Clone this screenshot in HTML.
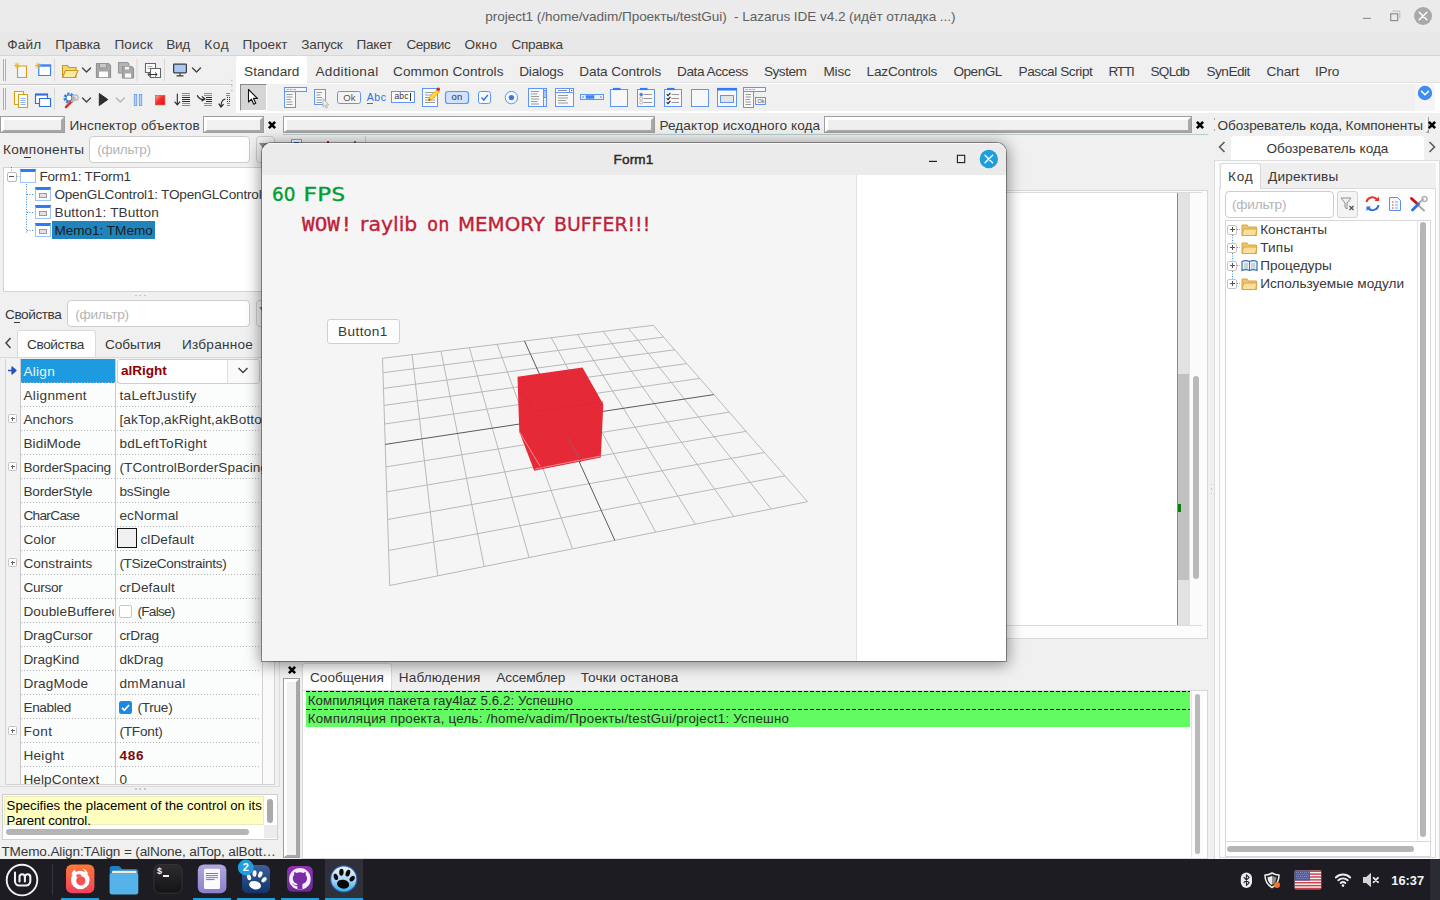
<!DOCTYPE html>
<html lang="ru"><head><meta charset="utf-8"><title>Lazarus IDE</title>
<style>
html,body{margin:0;padding:0}
body{width:1440px;height:900px;overflow:hidden;position:relative;background:#f0f0f0;font-family:"Liberation Sans",sans-serif;}
body div,body span.t,body svg{position:absolute}
div{box-sizing:border-box}
.t{white-space:nowrap}
</style></head><body>
<div style="left:0px;top:0px;width:1440px;height:32px;background:#ebebec;"></div>
<span class="t" style="left:485.3px;top:8.00px;font-size:13.6px;line-height:18px;color:#606060;letter-spacing:-0.073px;white-space:pre;">project1 (/home/vadim/Проекты/testGui)  - Lazarus IDE v4.2 (идёт отладка ...)</span>
<svg style="left:1355px;top:4px" width="85" height="24" viewBox="0 0 85 24">
<path d="M7.900 14.400h8" stroke="#8e8e8e" stroke-width="1.100" fill="none"/>
<rect x="35.700" y="9.800" width="7" height="6.800" fill="none" stroke="#8e8e8e" stroke-width="1.200"/>
<path d="M37.200 7.100h7.600v7.400" stroke="#bdbdbd" stroke-width="1" fill="none"/>
<circle cx="68.050" cy="12" r="9" fill="#a9a9ab"/>
<path d="M64.250 8.200l7.600 7.600M71.850 8.200l-7.600 7.600" stroke="#fff" stroke-width="1.500" stroke-linecap="round"/>
</svg>
<div style="left:0px;top:32px;width:1440px;height:24px;background:#e8e8e8;"></div>
<div style="left:0px;top:55px;width:1440px;height:1px;background:#d6d6d6;"></div>
<span class="t" style="left:7.2px;top:35.80px;font-size:13.6px;line-height:18px;color:#404040;letter-spacing:0.159px;">Файл</span>
<span class="t" style="left:55.2px;top:35.80px;font-size:13.6px;line-height:18px;color:#404040;letter-spacing:-0.164px;">Правка</span>
<span class="t" style="left:114.4px;top:35.80px;font-size:13.6px;line-height:18px;color:#404040;letter-spacing:0.132px;">Поиск</span>
<span class="t" style="left:166.3px;top:35.80px;font-size:13.6px;line-height:18px;color:#404040;letter-spacing:-0.397px;">Вид</span>
<span class="t" style="left:204.2px;top:35.80px;font-size:13.6px;line-height:18px;color:#404040;letter-spacing:0.738px;">Код</span>
<span class="t" style="left:242.5px;top:35.80px;font-size:13.6px;line-height:18px;color:#404040;letter-spacing:0.064px;">Проект</span>
<span class="t" style="left:301.3px;top:35.80px;font-size:13.6px;line-height:18px;color:#404040;letter-spacing:-0.206px;">Запуск</span>
<span class="t" style="left:356.4px;top:35.80px;font-size:13.6px;line-height:18px;color:#404040;letter-spacing:-0.216px;">Пакет</span>
<span class="t" style="left:406.4px;top:35.80px;font-size:13.6px;line-height:18px;color:#404040;letter-spacing:-0.453px;">Сервис</span>
<span class="t" style="left:464.4px;top:35.80px;font-size:13.6px;line-height:18px;color:#404040;letter-spacing:0.335px;">Окно</span>
<span class="t" style="left:511.5px;top:35.80px;font-size:13.6px;line-height:18px;color:#404040;letter-spacing:-0.305px;">Справка</span>
<div style="left:0px;top:56px;width:1440px;height:57px;background:#f0f0f0;"></div>
<div style="left:0px;top:84px;width:232px;height:1px;background:#c9c9c9;"></div>
<div style="left:0px;top:85px;width:232px;height:1px;background:#fbfbfb;"></div>
<div style="left:235.6px;top:56.4px;width:71.7px;height:28px;background:#ffffff;border-radius:3px 3px 0 0;"></div>
<div style="left:307.3px;top:82px;width:1133px;height:1px;background:#e2e2e2;"></div>
<div style="left:235.6px;top:82.7px;width:1204.4px;height:30.8px;background:#ffffff;"></div>
<div style="left:240.2px;top:84.2px;width:1175px;height:26.8px;background:#f0f0f0;"></div>
<div style="left:1415px;top:84.2px;width:20px;height:26.8px;background:#f5f5f5;"></div>
<span class="t" style="left:244.1px;top:62.90px;font-size:13.6px;line-height:18px;color:#3c3c3c;letter-spacing:0.004px;">Standard</span>
<span class="t" style="left:315.4px;top:62.90px;font-size:13.6px;line-height:18px;color:#3c3c3c;letter-spacing:0.342px;">Additional</span>
<span class="t" style="left:393.1px;top:62.90px;font-size:13.6px;line-height:18px;color:#3c3c3c;letter-spacing:0.061px;">Common Controls</span>
<span class="t" style="left:519.2px;top:62.90px;font-size:13.6px;line-height:18px;color:#3c3c3c;letter-spacing:-0.174px;">Dialogs</span>
<span class="t" style="left:579.2px;top:62.90px;font-size:13.6px;line-height:18px;color:#3c3c3c;letter-spacing:-0.084px;">Data Controls</span>
<span class="t" style="left:677px;top:62.90px;font-size:13.6px;line-height:18px;color:#3c3c3c;letter-spacing:-0.426px;">Data Access</span>
<span class="t" style="left:764px;top:62.90px;font-size:13.6px;line-height:18px;color:#3c3c3c;letter-spacing:-0.506px;">System</span>
<span class="t" style="left:823.5px;top:62.90px;font-size:13.6px;line-height:18px;color:#3c3c3c;letter-spacing:-0.218px;">Misc</span>
<span class="t" style="left:866.5px;top:62.90px;font-size:13.6px;line-height:18px;color:#3c3c3c;letter-spacing:-0.175px;">LazControls</span>
<span class="t" style="left:953.5px;top:62.90px;font-size:13.6px;line-height:18px;color:#3c3c3c;letter-spacing:-0.518px;">OpenGL</span>
<span class="t" style="left:1018.5px;top:62.90px;font-size:13.6px;line-height:18px;color:#3c3c3c;letter-spacing:-0.419px;">Pascal Script</span>
<span class="t" style="left:1108.5px;top:62.90px;font-size:13.6px;line-height:18px;color:#3c3c3c;letter-spacing:-1.223px;">RTTI</span>
<span class="t" style="left:1150.5px;top:62.90px;font-size:13.6px;line-height:18px;color:#3c3c3c;letter-spacing:-0.757px;">SQLdb</span>
<span class="t" style="left:1206.5px;top:62.90px;font-size:13.6px;line-height:18px;color:#3c3c3c;letter-spacing:-0.510px;">SynEdit</span>
<span class="t" style="left:1266.5px;top:62.90px;font-size:13.6px;line-height:18px;color:#3c3c3c;letter-spacing:-0.113px;">Chart</span>
<span class="t" style="left:1315px;top:62.90px;font-size:13.6px;line-height:18px;color:#3c3c3c;letter-spacing:-0.212px;">IPro</span>
<div style="left:240.2px;top:84.2px;width:26.8px;height:26.8px;background:#d5d5d5;border-left:1px solid #8a8a8a;border-top:1px solid #8a8a8a;border-right:1px solid #fff;border-bottom:1px solid #fff;"></div>
<svg style="left:1417px;top:85px" width="16" height="16" viewBox="0 0 16 16"><circle cx="8" cy="8" r="7.2" fill="#3f8cf5"/><path d="M4.6 6.4L8 9.8l3.4-3.4" stroke="#fff" stroke-width="1.6" fill="none" stroke-linecap="round" stroke-linejoin="round"/></svg>
<svg style="left:0;top:56px" width="236" height="57" viewBox="0 0 236 57"><path d="M3.5 3v22M5.5 3v22" stroke="#b0b0b0" stroke-width="1"/><path d="M3.5 32v22M5.5 32v22" stroke="#b0b0b0" stroke-width="1"/><path d="M54.5 3v22" stroke="#d6d6d6" stroke-width="1"/><path d="M137 3v22" stroke="#d6d6d6" stroke-width="1"/><path d="M164.5 3v22" stroke="#d6d6d6" stroke-width="1"/><path d="M54.5 32v22" stroke="#d6d6d6" stroke-width="1"/><path d="M17.500 10h9v11.500h-9z" fill="#f3f6fd" stroke="#d4a21a" stroke-width="1.200"/><path d="M17 6.500v6M14 9.500h6M14.900 7.400l4.200 4.200M19.100 7.400l-4.200 4.200" stroke="#f0b400" stroke-width=".9"/><path d="M38.800 9.500h11.700v10h-11.700z" fill="#fff" stroke="#3b82f6" stroke-width="1.200"/><path d="M38.200 9.500h12.900" stroke="#3b82f6" stroke-width="2.400"/><path d="M38 6.500v6M35 9.500h6M35.900 7.400l4.200 4.200M40.100 7.400l-4.200 4.200" stroke="#f0b400" stroke-width=".9"/><path d="M62.5 21.5v-12h5l1.5 2h7v10z" fill="#f7d774" stroke="#c99a1c" stroke-width="1.1"/><path d="M62.5 21.5l3-7h12.5l-3 7z" fill="#fbe9a6" stroke="#c99a1c" stroke-width="1.1" stroke-linejoin="round"/><path d="M82.5 12l4 4 4-4" stroke="#444" stroke-width="1.4" fill="none" stroke-linecap="round" stroke-linejoin="round"/><path d="M96.5 7.500h12l2 2v12h-14z" fill="#a9a9a9" stroke="#939393" stroke-width="1.200"/><rect x="99.500" y="7.500" width="7" height="4.500" fill="#c9c9c9" stroke="#939393" stroke-width="1"/><rect x="98.500" y="15" width="10" height="6.500" fill="#fdfdfd" stroke="#a0a0a0" stroke-width="1"/><path d="M118.5 6.500h9l1.500 1.500v9h-10.500z" fill="#b4b4b4" stroke="#999" stroke-width="1.100"/><path d="M122.500 10.500h9l2 2v9.500h-11z" fill="#a9a9a9" stroke="#939393" stroke-width="1.200"/><rect x="124.500" y="10.500" width="5" height="3.500" fill="#f4f4f4" stroke="#a9a9a9" stroke-width="1"/><rect x="124.500" y="17" width="7" height="5" fill="#fafafa" stroke="#a9a9a9" stroke-width="1"/><path d="M145.500 7.500h10v9h-10z" fill="#fff" stroke="#666" stroke-width="1.100"/><path d="M147.500 10.500h5M147.500 12.500h5" stroke="#aaa" stroke-width="1"/><path d="M150.500 12.500h10v9h-10z" fill="#fff" stroke="#666" stroke-width="1.100"/><path d="M148 18.500h9M150 16.500l-2.200 2 2.200 2M155 16.500l2.200 2-2.200 2" stroke="#333" stroke-width="1" fill="none"/><rect x="173.600" y="8.200" width="12.800" height="8.600" rx=".8" fill="#a9c8fa" stroke="#3a3a3a" stroke-width="1.200"/><path d="M180 17.200v2.300M176.500 19.900h7" stroke="#3a3a3a" stroke-width="1.200"/><path d="M192.5 12l4 4 4-4" stroke="#444" stroke-width="1.4" fill="none" stroke-linecap="round" stroke-linejoin="round"/><path d="M14.500 35.500h9v13h-9z" fill="#fffdf0" stroke="#d4a21a" stroke-width="1.200"/><path d="M18.500 38.500h9v13h-9z" fill="#fffdf0" stroke="#d4a21a" stroke-width="1.200"/><path d="M20.500 42.500h5M20.500 44.500h5M20.500 46.500h5M20.500 48.500h5" stroke="#8ab4f8" stroke-width="1"/><path d="M35.500 38.500h12v9h-12z" fill="#fff" stroke="#2f6fe0" stroke-width="1.200"/><path d="M35 38.500h13" stroke="#2f6fe0" stroke-width="2.200"/><path d="M39.500 42.500h11v8h-11z" fill="#fff" stroke="#2f6fe0" stroke-width="1.200"/><circle cx="69" cy="42" r="4.200" fill="none" stroke="#3b7bdc" stroke-width="2.600" stroke-dasharray="2.200 1.300"/><circle cx="69" cy="42" r="3" fill="#fff" stroke="#3b7bdc" stroke-width="1.200"/><path d="M66 51l7.500-7.500" stroke="#e0352b" stroke-width="2.600" stroke-linecap="round"/><path d="M72 45l3-3" stroke="#bbb" stroke-width="2.400" stroke-linecap="round"/><circle cx="75.500" cy="41.500" r="2.600" fill="none" stroke="#bdbdbd" stroke-width="1.500"/><path d="M82.5 42l4 4 4-4" stroke="#444" stroke-width="1.4" fill="none" stroke-linecap="round" stroke-linejoin="round"/><path d="M99.300 37.500l8.500 6-8.500 6z" fill="#2e2e2e" stroke="#2e2e2e" stroke-width="1" stroke-linejoin="round"/><path d="M116.3 42l4 4 4-4" stroke="#b5b5b5" stroke-width="1.4" fill="none" stroke-linecap="round" stroke-linejoin="round"/><rect x="134.300" y="38.500" width="2.400" height="11" fill="#b8d2fb" stroke="#6f9fe6" stroke-width=".9"/><rect x="139.300" y="38.500" width="2.400" height="11" fill="#b8d2fb" stroke="#6f9fe6" stroke-width=".9"/><defs><linearGradient id="gst" x1="0" y1="0" x2="1" y2="1"><stop offset="0" stop-color="#ffb0ac"/><stop offset=".45" stop-color="#f2302c"/><stop offset="1" stop-color="#e01410"/></linearGradient></defs><rect x="155.300" y="39.300" width="9.600" height="9.600" fill="url(#gst)" stroke="#e8423e" stroke-width=".6"/><path d="M177.300 37.700V48.500M174.600 45.700L177.300 48.900L180 45.700" stroke="#2a2a2a" stroke-width="1.100" fill="none"/><path d="M182 37.500h8M182 39.500h8M182 47.500h8M182 49.500h8" stroke="#8c8c8c" stroke-width="1"/><path d="M182 41.500h8M182 43.500h8M182 45.500h8" stroke="#2a2a2a" stroke-width="1"/><path d="M197.200 39.300C198.800 42.800 201 44 204.400 43.100M201.800 40.400L205 43L201.500 45.300" stroke="#2a2a2a" stroke-width="1.200" fill="none"/><path d="M204 37.500h8M204 39.500h8M204 47.500h8M204 49.500h8" stroke="#8c8c8c" stroke-width="1"/><path d="M206 41.500h6M206 43.500h6M206 45.500h6" stroke="#2a2a2a" stroke-width="1"/><path d="M225.400 43C222.500 43.500 221 46 221 50.500M218.700 47.700L221 51L223.600 48.100" stroke="#2a2a2a" stroke-width="1.200" fill="none"/><path d="M226 37.500h4M226 39.500h4M227 47.500h3M227 49.500h3" stroke="#8c8c8c" stroke-width="1"/><path d="M227 41.500h3M227 43.500h3M227 45.500h3" stroke="#2a2a2a" stroke-width="1" stroke-dasharray="1 1"/><path d="M231 24.500h1.600M231 29.500h1.600M231 34.500h1.600" stroke="#c4c4c4" stroke-width="1.600"/></svg>
<svg style="left:244px;top:87px" width="18" height="20" viewBox="0 0 18 20"><path d="M4.500 2.500v12.500l3-2.800 2.300 5 2-1-2.300-4.800h4z" fill="#fff" stroke="#111" stroke-width="1.100" stroke-linejoin="round"/></svg>
<svg style="left:280px;top:82px" width="490" height="32" viewBox="0 0 490 32"><rect x="4.5" y="5.5" width="22.0" height="4.0" rx="0" fill="#f2f6ff" stroke="#5f95f8" stroke-width="1"/><rect x="4.5" y="9.5" width="11.0" height="16.0" rx="0" fill="#f8f8f8" stroke="#5f95f8" stroke-width="1"/><path d="M6.5 7.5H9" stroke="#aaa" stroke-width="1"/><path d="M10 7.5H12.5" stroke="#aaa" stroke-width="1"/><path d="M13.5 7.5H16" stroke="#aaa" stroke-width="1"/><path d="M6.5 12.5H12.5" stroke="#9a9a9a" stroke-width="1"/><path d="M6.5 15H12.5" stroke="#9a9a9a" stroke-width="1"/><path d="M6.5 17.5H11" stroke="#9a9a9a" stroke-width="1"/><path d="M6.5 20H12.5" stroke="#9a9a9a" stroke-width="1"/><path d="M6.5 22.5H12.5" stroke="#9a9a9a" stroke-width="1"/><rect x="34.5" y="7.5" width="11.0" height="15.0" rx="0" fill="#f8f8f8" stroke="#5f95f8" stroke-width="1"/><path d="M36.5 10.5H42" stroke="#9a9a9a" stroke-width="1"/><path d="M36.5 13H40.5" stroke="#9a9a9a" stroke-width="1"/><path d="M36.5 15.5H42" stroke="#9a9a9a" stroke-width="1"/><path d="M36.5 18H42" stroke="#9a9a9a" stroke-width="1"/><path d="M36.5 20.5H42" stroke="#9a9a9a" stroke-width="1"/><path d="M43 16.5v8.500l2-1.600 1.300 2.800 1.200-.6-1.300-2.700h2.600z" fill="#eee" stroke="#aaa" stroke-width=".8" stroke-linejoin="round"/><rect x="57.5" y="9.5" width="23.0" height="12.0" rx="2" fill="#f3f3f3" stroke="#5f95f8" stroke-width="1"/><rect x="111.5" y="9.5" width="23.0" height="11.0" rx="0" fill="#fff" stroke="#5f95f8" stroke-width="1"/><rect x="142.5" y="6.5" width="15.0" height="18.0" rx="0" fill="#fff" stroke="#5f95f8" stroke-width="1"/><path d="M145 10.5H155" stroke="#999" stroke-width="1"/><path d="M145 13H155" stroke="#999" stroke-width="1"/><path d="M145 15.5H155" stroke="#999" stroke-width="1"/><path d="M145 18H155" stroke="#999" stroke-width="1"/><path d="M145 20.5H155" stroke="#999" stroke-width="1"/><path d="M148.5 18.5l1-3.500 7.500-7.500 2.500 2.500-7.500 7.500z" fill="#ffd83b" stroke="#d9a400" stroke-width=".8"/><circle cx="158.3" cy="7.3" r="1.700" fill="#e01b24"/><path d="M148.5 18.5l.6-2 1.400 1.400z" fill="#444"/><rect x="165.5" y="9.5" width="23.0" height="12.0" rx="2.5" fill="#cfe2ff" stroke="#5f95f8" stroke-width="1.2"/><rect x="198.5" y="9.5" width="12.0" height="12.0" rx="2" fill="#f6f8ff" stroke="#5f95f8" stroke-width="1"/><path d="M201.5 15.5l2.300 2.500 4-5" stroke="#3b78e7" stroke-width="1.500" fill="none"/><circle cx="231.4" cy="15.6" r="6.200" fill="#f6f8ff" stroke="#5f95f8" stroke-width="1"/><circle cx="231.4" cy="15.6" r="2.700" fill="#3b78e7"/><rect x="248.5" y="6.5" width="18.0" height="18.0" rx="0" fill="#f8f8f8" stroke="#5f95f8" stroke-width="1"/><rect x="263.5" y="6.5" width="3.0" height="18.0" rx="0" fill="#e8eefc" stroke="#5f95f8" stroke-width="1"/><rect x="263.5" y="8.5" width="3.0" height="7.0" rx="0" fill="#a9c4fb" stroke="#5f95f8" stroke-width="1"/><path d="M251 9.5H259" stroke="#9a9a9a" stroke-width="1"/><path d="M251 12H257.5" stroke="#9a9a9a" stroke-width="1"/><path d="M251 14.5H259" stroke="#9a9a9a" stroke-width="1"/><path d="M251 17H259" stroke="#9a9a9a" stroke-width="1"/><path d="M251 19.5H257.5" stroke="#9a9a9a" stroke-width="1"/><path d="M251 22H259" stroke="#9a9a9a" stroke-width="1"/><rect x="275.5" y="6.5" width="18.0" height="18.0" rx="0" fill="#f8f8f8" stroke="#5f95f8" stroke-width="1"/><rect x="275.5" y="6.5" width="18.0" height="4.0" rx="0" fill="#fff" stroke="#5f95f8" stroke-width="1"/><path d="M289.5 6.5v4" stroke="#5f95f8" stroke-width="1"/><path d="M290.6 8l1 1.200 1-1.200z" fill="#444"/><path d="M278 8.5H287" stroke="#888" stroke-width="1"/><path d="M278 13.5H288" stroke="#9a9a9a" stroke-width="1"/><path d="M278 16H288" stroke="#9a9a9a" stroke-width="1"/><path d="M278 18.5H286" stroke="#9a9a9a" stroke-width="1"/><path d="M278 21H288" stroke="#9a9a9a" stroke-width="1"/><rect x="300.5" y="12.5" width="23.0" height="5.0" rx="0" fill="#e9effc" stroke="#5f95f8" stroke-width="1"/><rect x="306" y="13.5" width="8" height="3.0" rx="0" fill="#3b82f6" stroke="#3b82f6" stroke-width="0.5"/><path d="M303.5 13.8l-1.500 1.200 1.500 1.200zM320.5 13.8l1.500 1.200-1.500 1.200z" fill="#3b78e7"/><rect x="330.5" y="7.5" width="17.0" height="17.0" rx="0" fill="#f8f8f8" stroke="#5f95f8" stroke-width="1"/><path d="M333.0 7h7.500" stroke="#2f7bf6" stroke-width="2.200"/><rect x="357.5" y="7.5" width="17.0" height="17.0" rx="0" fill="#f8f8f8" stroke="#5f95f8" stroke-width="1"/><path d="M360.0 7h7.500" stroke="#2f7bf6" stroke-width="2.200"/><rect x="384.5" y="7.5" width="17.0" height="17.0" rx="0" fill="#f8f8f8" stroke="#5f95f8" stroke-width="1"/><path d="M387.0 7h7.500" stroke="#2f7bf6" stroke-width="2.200"/><circle cx="361.2" cy="12.5" r="1.500" fill="#3b78e7" stroke="#888" stroke-width=".6"/><path d="M363.5 12.5H372" stroke="#999" stroke-width="1"/><path d="M386.7 12.2l1.400 1.500 2.300-2.800" stroke="#222" stroke-width="1.100" fill="none"/><path d="M391.5 12.5H399" stroke="#999" stroke-width="1"/><circle cx="361.2" cy="16.5" r="1.500" fill="#fff" stroke="#888" stroke-width=".6"/><path d="M363.5 16.5H372" stroke="#999" stroke-width="1"/><path d="M386.7 16.2l1.400 1.500 2.300-2.800" stroke="#222" stroke-width="1.100" fill="none"/><path d="M391.5 16.5H399" stroke="#999" stroke-width="1"/><circle cx="361.2" cy="20.5" r="1.500" fill="#fff" stroke="#888" stroke-width=".6"/><path d="M363.5 20.5H372" stroke="#999" stroke-width="1"/><path d="M386.7 20.2l1.400 1.500 2.300-2.800" stroke="#222" stroke-width="1.100" fill="none"/><path d="M391.5 20.5H399" stroke="#999" stroke-width="1"/><rect x="411.5" y="7.5" width="17.0" height="17.0" rx="0" fill="#f8f8f8" stroke="#5f95f8" stroke-width="1"/><rect x="437.5" y="6.5" width="19.0" height="18.0" rx="0" fill="#f8f8f8" stroke="#5f95f8" stroke-width="1"/><path d="M437 7.2h20" stroke="#2f7bf6" stroke-width="2.600"/><rect x="440.5" y="13.5" width="13.0" height="7.0" rx="0" fill="#e4e4e4" stroke="#5f95f8" stroke-width="1"/><rect x="463.5" y="5.5" width="22.0" height="4.0" rx="0" fill="#f2f6ff" stroke="#5f95f8" stroke-width="1"/><rect x="463.5" y="9.5" width="10.0" height="16.0" rx="0" fill="#f8f8f8" stroke="#5f95f8" stroke-width="1"/><path d="M465.5 7.5H468" stroke="#aaa" stroke-width="1"/><path d="M469 7.5H471.5" stroke="#aaa" stroke-width="1"/><path d="M472.5 7.5H475" stroke="#aaa" stroke-width="1"/><path d="M465.5 12.5H471" stroke="#9a9a9a" stroke-width="1"/><path d="M465.5 15H471" stroke="#9a9a9a" stroke-width="1"/><path d="M465.5 17.5H470" stroke="#9a9a9a" stroke-width="1"/><path d="M465.5 20H471" stroke="#9a9a9a" stroke-width="1"/><path d="M465.5 22.5H471" stroke="#9a9a9a" stroke-width="1"/><rect x="475.5" y="15.5" width="10.0" height="7.0" rx="0" fill="#f3f3f3" stroke="#5f95f8" stroke-width="1"/></svg>
<span class="t" style="left:343.2px;top:91.60px;font-size:9.5px;line-height:12px;color:#555;letter-spacing:0.159px;">Ok</span>
<span class="t" style="left:366.8px;top:90.20px;font-size:10.5px;line-height:14px;color:#2f6fe0;letter-spacing:0.553px;">Abc</span>
<div style="left:366.8px;top:102.6px;width:6.2px;height:1px;background:#2f6fe0;"></div>
<span class="t" style="left:394.6px;top:91.10px;font-size:8.5px;line-height:11px;color:#333;letter-spacing:0.041px;">abc</span>
<div style="left:409.6px;top:93px;width:1px;height:8px;background:#333;"></div>
<span class="t" style="left:451.6px;top:91.20px;font-size:9.5px;line-height:12px;color:#333;letter-spacing:0.222px;">on</span>
<span class="t" style="left:757.6px;top:97.70px;font-size:5.5px;line-height:7px;color:#555;letter-spacing:-0.231px;">Ok</span>
<div style="left:0px;top:116px;width:65px;height:17px;background:#9e9e9e;"><div style="left:1px;top:1px;width:63px;height:15px;background:#f0f0f0;border-style:solid;border-width:3px 3px 2.500px 3px;border-color:#fff #a8a8a8 #a8a8a8 #fff"></div></div>
<span class="t" style="left:69.4px;top:116.60px;font-size:13.6px;line-height:18px;color:#383838;letter-spacing:0.142px;">Инспектор объектов</span>
<div style="left:203px;top:116px;width:61px;height:17px;background:#9e9e9e;"><div style="left:1px;top:1px;width:59px;height:15px;background:#f0f0f0;border-style:solid;border-width:3px 3px 2.500px 3px;border-color:#fff #a8a8a8 #a8a8a8 #fff"></div></div>
<svg style="left:265.9px;top:118.9px" width="12" height="12" viewBox="-6 -6 12 12"><path d="M-3.1 -3.1L3.1 3.1M3.1 -3.1L-3.1 3.1" stroke="#000" stroke-width="2.600"/></svg>
<span class="t" style="left:3px;top:141.20px;font-size:13.6px;line-height:18px;color:#383838;letter-spacing:0.308px;">Компоненты</span>
<div style="left:23.5px;top:156.5px;width:7.5px;height:1px;background:#383838;"></div>
<div style="left:89px;top:135.5px;width:160.5px;height:27px;background:#fff;border:1px solid #cdcdcd;border-radius:4px;"></div>
<span class="t" style="left:97.3px;top:141.00px;font-size:13.6px;line-height:18px;color:#b4b4b4;letter-spacing:-0.254px;">(фильтр)</span>
<div style="left:255.5px;top:135.5px;width:19.5px;height:27px;background:#f4f4f4;border:1px solid #cdcdcd;border-radius:4px;"></div>
<svg style="left:257px;top:139.300px" width="20" height="18" viewBox="0 0 20 18"><path d="M2 4h9l-3.500 4.500v5l-2 -1.500v-3.500z" fill="#8e8e8e"/></svg>
<div style="left:3px;top:166.5px;width:277.5px;height:125px;background:#fff;border:1px solid #d4d4d4;"></div>
<div style="left:6.5px;top:171.5px;width:10px;height:10px;background:#fff;border:1px solid #b9b9b9;border-radius:2px;"></div>
<div style="left:9px;top:176px;width:5px;height:1px;background:#555;"></div>
<svg style="left:0;top:166px" width="60" height="80" viewBox="0 0 60 80"><g stroke="#3c8fd0" stroke-width="1" stroke-dasharray="1 1.500" fill="none"><path d="M11.500 1v4"/><path d="M16.500 10.500h3"/><path d="M26.500 18v49"/><path d="M27 28.500h7M27 46.500h7M27 64.500h7"/></g></svg>
<div style="left:20.3px;top:169.2px;width:15.5px;height:13.5px;background:#fff;border:1px solid #9ec1fb;border-top:3px solid #2f7bf6;"></div>
<span class="t" style="left:39.4px;top:167.60px;font-size:13.6px;line-height:18px;color:#383838;letter-spacing:-0.206px;">Form1: TForm1</span>
<div style="left:35.3px;top:187.2px;width:15.5px;height:13.5px;background:#fff;border:1px solid #9ec1fb;border-top:3px solid #2f7bf6;"></div>
<div style="left:39.3px;top:193.2px;width:8px;height:5px;background:#e1e1e1;border:1px solid #9b9b9b;"></div>
<div style="left:54.4px;top:185.70px;width:224.6px;height:18px;overflow:hidden"><span class="t" style="left:0;top:0;font-size:13.6px;line-height:18px;color:#383838;letter-spacing:-0.209px;">OpenGLControl1: TOpenGLControl</span></div>
<div style="left:35.3px;top:205.2px;width:15.5px;height:13.5px;background:#fff;border:1px solid #9ec1fb;border-top:3px solid #2f7bf6;"></div>
<div style="left:39.3px;top:211.2px;width:8px;height:5px;background:#e1e1e1;border:1px solid #9b9b9b;"></div>
<span class="t" style="left:54.4px;top:203.60px;font-size:13.6px;line-height:18px;color:#383838;letter-spacing:0.175px;">Button1: TButton</span>
<div style="left:35.3px;top:223.2px;width:15.5px;height:13.5px;background:#fff;border:1px solid #9ec1fb;border-top:3px solid #2f7bf6;"></div>
<div style="left:39.3px;top:229.2px;width:8px;height:5px;background:#e1e1e1;border:1px solid #9b9b9b;"></div>
<div style="left:52px;top:221.3px;width:103px;height:17.6px;background:#1f84bb;"></div>
<span class="t" style="left:54.4px;top:221.50px;font-size:13.6px;line-height:18px;color:#1d1d1d;letter-spacing:-0.029px;">Memo1: TMemo</span>
<div style="left:134.5px;top:294.5px;width:2px;height:1.5px;background:#c6c6c6;"></div>
<div style="left:139px;top:294.5px;width:2px;height:1.5px;background:#c6c6c6;"></div>
<div style="left:143.5px;top:294.5px;width:2px;height:1.5px;background:#c6c6c6;"></div>
<span class="t" style="left:5px;top:306.10px;font-size:13.6px;line-height:18px;color:#383838;letter-spacing:-0.415px;">Свойства</span>
<div style="left:13.6px;top:322px;width:6.5px;height:1px;background:#383838;"></div>
<div style="left:67px;top:299.5px;width:182.5px;height:27px;background:#fff;border:1px solid #cdcdcd;border-radius:4px;"></div>
<span class="t" style="left:75.3px;top:305.90px;font-size:13.6px;line-height:18px;color:#b4b4b4;letter-spacing:-0.254px;">(фильтр)</span>
<div style="left:255.5px;top:299.5px;width:19.5px;height:27px;background:#f4f4f4;border:1px solid #cdcdcd;border-radius:4px;"></div>
<svg style="left:257px;top:303.300px" width="20" height="18" viewBox="0 0 20 18"><path d="M2 4h9l-3.500 4.500v5l-2 -1.500v-3.500z" fill="#8e8e8e"/></svg>
<svg style="left:3px;top:336px" width="10" height="14" viewBox="0 0 10 14"><path d="M7.500 2L3 7l4.500 5" stroke="#444" stroke-width="1.500" fill="none"/></svg>
<div style="left:16.5px;top:330px;width:79px;height:28px;background:#fff;border:1px solid #dadada;border-bottom:none;border-radius:3px 3px 0 0;"></div>
<span class="t" style="left:27px;top:336.00px;font-size:13.6px;line-height:18px;color:#383838;letter-spacing:-0.358px;">Свойства</span>
<span class="t" style="left:105px;top:336.30px;font-size:13.6px;line-height:18px;color:#383838;letter-spacing:-0.054px;">События</span>
<span class="t" style="left:182px;top:336.30px;font-size:13.6px;line-height:18px;color:#383838;letter-spacing:0.237px;">Избранное</span>
<div style="left:0px;top:357px;width:280px;height:430px;background:#f0f0f0;border-top:1px solid #d9d9d9;border-right:1px solid #dcdcdc;border-bottom:1px solid #dcdcdc;"></div>
<div style="left:5px;top:358.5px;width:270px;height:426px;background:#fbfdfd;border-left:1px solid #d4d4d4;border-right:1px solid #d4d4d4;border-bottom:1px solid #d4d4d4;"></div>
<div style="left:6px;top:358.5px;width:14.5px;height:425px;background:#f2f2f2;"></div>
<div style="left:20px;top:358.5px;width:1px;height:425px;background:#c9c9c9;"></div>
<div style="left:114.5px;top:358.5px;width:1px;height:425px;background:#c9c9c9;"></div>
<div style="left:261.5px;top:358.5px;width:1px;height:425px;background:#d2d2d2;"></div>
<div style="left:262.5px;top:358.5px;width:11.5px;height:425px;background:#fafafa;"></div>
<div style="left:20.5px;top:358.5px;width:94.5px;height:24px;background:#1e9be0;"></div>
<span class="t" style="left:23.4px;top:362.50px;font-size:13.6px;line-height:18px;color:#e8f4fc;letter-spacing:0.291px;">Align</span>
<div style="left:21px;top:382.0px;width:240px;height:1px;background:repeating-linear-gradient(90deg,#b4b4b4 0 1px,transparent 1px 3px);"></div>
<div style="left:23.4px;top:386.50px;width:91.1px;height:18px;overflow:hidden"><span class="t" style="left:0;top:0;font-size:13.6px;line-height:18px;color:#383838;letter-spacing:0.343px;">Alignment</span></div>
<div style="left:119.4px;top:386.50px;width:142.6px;height:18px;overflow:hidden"><span class="t" style="left:0;top:0;font-size:13.6px;line-height:18px;color:#383838;letter-spacing:0.371px;">taLeftJustify</span></div>
<div style="left:21px;top:406.0px;width:240px;height:1px;background:repeating-linear-gradient(90deg,#b4b4b4 0 1px,transparent 1px 3px);"></div>
<div style="left:23.4px;top:410.50px;width:91.1px;height:18px;overflow:hidden"><span class="t" style="left:0;top:0;font-size:13.6px;line-height:18px;color:#383838;letter-spacing:0.021px;">Anchors</span></div>
<div style="left:119.4px;top:410.50px;width:142.6px;height:18px;overflow:hidden"><span class="t" style="left:0;top:0;font-size:13.6px;line-height:18px;color:#383838;letter-spacing:0.126px;">[akTop,akRight,akBottom]</span></div>
<div style="left:21px;top:430.0px;width:240px;height:1px;background:repeating-linear-gradient(90deg,#b4b4b4 0 1px,transparent 1px 3px);"></div>
<div style="left:8px;top:414.0px;width:9px;height:9px;background:#fff;border:1px solid #c4c4c4;border-radius:1.500px;"></div>
<div style="left:10.5px;top:418.0px;width:4px;height:1px;background:#666;"></div>
<div style="left:12px;top:416.5px;width:1px;height:4px;background:#666;"></div>
<div style="left:23.4px;top:434.50px;width:91.1px;height:18px;overflow:hidden"><span class="t" style="left:0;top:0;font-size:13.6px;line-height:18px;color:#383838;letter-spacing:0.118px;">BidiMode</span></div>
<div style="left:119.4px;top:434.50px;width:142.6px;height:18px;overflow:hidden"><span class="t" style="left:0;top:0;font-size:13.6px;line-height:18px;color:#383838;letter-spacing:0.301px;">bdLeftToRight</span></div>
<div style="left:21px;top:454.0px;width:240px;height:1px;background:repeating-linear-gradient(90deg,#b4b4b4 0 1px,transparent 1px 3px);"></div>
<div style="left:23.4px;top:458.50px;width:91.1px;height:18px;overflow:hidden"><span class="t" style="left:0;top:0;font-size:13.6px;line-height:18px;color:#383838;letter-spacing:-0.178px;">BorderSpacing</span></div>
<div style="left:119.4px;top:458.50px;width:142.6px;height:18px;overflow:hidden"><span class="t" style="left:0;top:0;font-size:13.6px;line-height:18px;color:#383838;letter-spacing:0.100px;">(TControlBorderSpacing)</span></div>
<div style="left:21px;top:478.0px;width:240px;height:1px;background:repeating-linear-gradient(90deg,#b4b4b4 0 1px,transparent 1px 3px);"></div>
<div style="left:8px;top:462.0px;width:9px;height:9px;background:#fff;border:1px solid #c4c4c4;border-radius:1.500px;"></div>
<div style="left:10.5px;top:466.0px;width:4px;height:1px;background:#666;"></div>
<div style="left:12px;top:464.5px;width:1px;height:4px;background:#666;"></div>
<div style="left:23.4px;top:482.50px;width:91.1px;height:18px;overflow:hidden"><span class="t" style="left:0;top:0;font-size:13.6px;line-height:18px;color:#383838;letter-spacing:-0.183px;">BorderStyle</span></div>
<div style="left:119.4px;top:482.50px;width:142.6px;height:18px;overflow:hidden"><span class="t" style="left:0;top:0;font-size:13.6px;line-height:18px;color:#383838;letter-spacing:-0.222px;">bsSingle</span></div>
<div style="left:21px;top:502.0px;width:240px;height:1px;background:repeating-linear-gradient(90deg,#b4b4b4 0 1px,transparent 1px 3px);"></div>
<div style="left:23.4px;top:506.50px;width:91.1px;height:18px;overflow:hidden"><span class="t" style="left:0;top:0;font-size:13.6px;line-height:18px;color:#383838;letter-spacing:-0.658px;">CharCase</span></div>
<div style="left:119.4px;top:506.50px;width:142.6px;height:18px;overflow:hidden"><span class="t" style="left:0;top:0;font-size:13.6px;line-height:18px;color:#383838;letter-spacing:0.118px;">ecNormal</span></div>
<div style="left:21px;top:526.0px;width:240px;height:1px;background:repeating-linear-gradient(90deg,#b4b4b4 0 1px,transparent 1px 3px);"></div>
<div style="left:23.4px;top:530.50px;width:91.1px;height:18px;overflow:hidden"><span class="t" style="left:0;top:0;font-size:13.6px;line-height:18px;color:#383838;letter-spacing:-0.046px;">Color</span></div>
<div style="left:140.4px;top:530.50px;width:121.6px;height:18px;overflow:hidden"><span class="t" style="left:0;top:0;font-size:13.6px;line-height:18px;color:#383838;letter-spacing:0.089px;">clDefault</span></div>
<div style="left:21px;top:550.0px;width:240px;height:1px;background:repeating-linear-gradient(90deg,#b4b4b4 0 1px,transparent 1px 3px);"></div>
<div style="left:23.4px;top:554.50px;width:91.1px;height:18px;overflow:hidden"><span class="t" style="left:0;top:0;font-size:13.6px;line-height:18px;color:#383838;letter-spacing:0.013px;">Constraints</span></div>
<div style="left:119.4px;top:554.50px;width:142.6px;height:18px;overflow:hidden"><span class="t" style="left:0;top:0;font-size:13.6px;line-height:18px;color:#383838;letter-spacing:-0.310px;">(TSizeConstraints)</span></div>
<div style="left:21px;top:574.0px;width:240px;height:1px;background:repeating-linear-gradient(90deg,#b4b4b4 0 1px,transparent 1px 3px);"></div>
<div style="left:8px;top:558.0px;width:9px;height:9px;background:#fff;border:1px solid #c4c4c4;border-radius:1.500px;"></div>
<div style="left:10.5px;top:562.0px;width:4px;height:1px;background:#666;"></div>
<div style="left:12px;top:560.5px;width:1px;height:4px;background:#666;"></div>
<div style="left:23.4px;top:578.50px;width:91.1px;height:18px;overflow:hidden"><span class="t" style="left:0;top:0;font-size:13.6px;line-height:18px;color:#383838;letter-spacing:-0.259px;">Cursor</span></div>
<div style="left:119.4px;top:578.50px;width:142.6px;height:18px;overflow:hidden"><span class="t" style="left:0;top:0;font-size:13.6px;line-height:18px;color:#383838;letter-spacing:0.124px;">crDefault</span></div>
<div style="left:21px;top:598.0px;width:240px;height:1px;background:repeating-linear-gradient(90deg,#b4b4b4 0 1px,transparent 1px 3px);"></div>
<div style="left:23.4px;top:602.50px;width:91.1px;height:18px;overflow:hidden"><span class="t" style="left:0;top:0;font-size:13.6px;line-height:18px;color:#383838;letter-spacing:0.120px;">DoubleBuffered</span></div>
<div style="left:137.4px;top:602.50px;width:124.6px;height:18px;overflow:hidden"><span class="t" style="left:0;top:0;font-size:13.6px;line-height:18px;color:#383838;letter-spacing:-0.716px;">(False)</span></div>
<div style="left:21px;top:622.0px;width:240px;height:1px;background:repeating-linear-gradient(90deg,#b4b4b4 0 1px,transparent 1px 3px);"></div>
<div style="left:23.4px;top:626.50px;width:91.1px;height:18px;overflow:hidden"><span class="t" style="left:0;top:0;font-size:13.6px;line-height:18px;color:#383838;letter-spacing:-0.118px;">DragCursor</span></div>
<div style="left:119.4px;top:626.50px;width:142.6px;height:18px;overflow:hidden"><span class="t" style="left:0;top:0;font-size:13.6px;line-height:18px;color:#383838;letter-spacing:-0.199px;">crDrag</span></div>
<div style="left:21px;top:646.0px;width:240px;height:1px;background:repeating-linear-gradient(90deg,#b4b4b4 0 1px,transparent 1px 3px);"></div>
<div style="left:23.4px;top:650.50px;width:91.1px;height:18px;overflow:hidden"><span class="t" style="left:0;top:0;font-size:13.6px;line-height:18px;color:#383838;letter-spacing:-0.096px;">DragKind</span></div>
<div style="left:119.4px;top:650.50px;width:142.6px;height:18px;overflow:hidden"><span class="t" style="left:0;top:0;font-size:13.6px;line-height:18px;color:#383838;letter-spacing:0.034px;">dkDrag</span></div>
<div style="left:21px;top:670.0px;width:240px;height:1px;background:repeating-linear-gradient(90deg,#b4b4b4 0 1px,transparent 1px 3px);"></div>
<div style="left:23.4px;top:674.50px;width:91.1px;height:18px;overflow:hidden"><span class="t" style="left:0;top:0;font-size:13.6px;line-height:18px;color:#383838;letter-spacing:0.176px;">DragMode</span></div>
<div style="left:119.4px;top:674.50px;width:142.6px;height:18px;overflow:hidden"><span class="t" style="left:0;top:0;font-size:13.6px;line-height:18px;color:#383838;letter-spacing:0.347px;">dmManual</span></div>
<div style="left:21px;top:694.0px;width:240px;height:1px;background:repeating-linear-gradient(90deg,#b4b4b4 0 1px,transparent 1px 3px);"></div>
<div style="left:23.4px;top:698.50px;width:91.1px;height:18px;overflow:hidden"><span class="t" style="left:0;top:0;font-size:13.6px;line-height:18px;color:#383838;letter-spacing:-0.332px;">Enabled</span></div>
<div style="left:137.4px;top:698.50px;width:124.6px;height:18px;overflow:hidden"><span class="t" style="left:0;top:0;font-size:13.6px;line-height:18px;color:#383838;letter-spacing:-0.240px;">(True)</span></div>
<div style="left:21px;top:718.0px;width:240px;height:1px;background:repeating-linear-gradient(90deg,#b4b4b4 0 1px,transparent 1px 3px);"></div>
<div style="left:23.4px;top:722.50px;width:91.1px;height:18px;overflow:hidden"><span class="t" style="left:0;top:0;font-size:13.6px;line-height:18px;color:#383838;letter-spacing:0.499px;">Font</span></div>
<div style="left:119.4px;top:722.50px;width:142.6px;height:18px;overflow:hidden"><span class="t" style="left:0;top:0;font-size:13.6px;line-height:18px;color:#383838;letter-spacing:-0.194px;">(TFont)</span></div>
<div style="left:21px;top:742.0px;width:240px;height:1px;background:repeating-linear-gradient(90deg,#b4b4b4 0 1px,transparent 1px 3px);"></div>
<div style="left:8px;top:726.0px;width:9px;height:9px;background:#fff;border:1px solid #c4c4c4;border-radius:1.500px;"></div>
<div style="left:10.5px;top:730.0px;width:4px;height:1px;background:#666;"></div>
<div style="left:12px;top:728.5px;width:1px;height:4px;background:#666;"></div>
<div style="left:23.4px;top:746.50px;width:91.1px;height:18px;overflow:hidden"><span class="t" style="left:0;top:0;font-size:13.6px;line-height:18px;color:#383838;letter-spacing:0.281px;">Height</span></div>
<div style="left:119.4px;top:746.50px;width:142.6px;height:18px;overflow:hidden"><span class="t" style="left:0;top:0;font-size:13.6px;line-height:18px;color:#7a0c0c;font-weight:bold;letter-spacing:0.756px;">486</span></div>
<div style="left:21px;top:766.0px;width:240px;height:1px;background:repeating-linear-gradient(90deg,#b4b4b4 0 1px,transparent 1px 3px);"></div>
<div style="left:23.4px;top:770.50px;width:91.1px;height:18px;overflow:hidden"><span class="t" style="left:0;top:0;font-size:13.6px;line-height:18px;color:#383838;letter-spacing:0.099px;">HelpContext</span></div>
<div style="left:119.4px;top:770.50px;width:142.6px;height:18px;overflow:hidden"><span class="t" style="left:0;top:0;font-size:13.6px;line-height:18px;color:#383838;">0</span></div>
<svg style="left:7px;top:365px" width="11" height="11" viewBox="0 0 11 11"><path d="M1 5.500h5M5 2l4 3.500-4 3.500z" fill="#2a52be" stroke="#2a52be" stroke-width="1.300" stroke-linejoin="round"/></svg>
<div style="left:116.5px;top:359px;width:143.5px;height:24.5px;background:#fff;border:1px solid #cfcfcf;border-radius:3px;"></div>
<div style="left:227px;top:360px;width:1px;height:22.5px;background:#dedede;"></div>
<div style="left:228px;top:360px;width:31px;height:22.5px;background:#fafafa;border-radius:0 3px 3px 0;"></div>
<span class="t" style="left:121px;top:362.40px;font-size:13.6px;line-height:18px;color:#8b0000;font-weight:bold;letter-spacing:-0.046px;">alRight</span>
<svg style="left:236px;top:365px" width="14" height="10" viewBox="0 0 14 10"><path d="M2.500 3l4.500 4.500L11.500 3" stroke="#444" stroke-width="1.500" fill="none"/></svg>
<div style="left:117px;top:528px;width:20px;height:19.5px;background:#f0f0f0;border:1px solid #111;"></div>
<div style="left:119.4px;top:605px;width:13px;height:13px;background:#fff;border:1px solid #c6c6c6;border-radius:2px;"></div>
<div style="left:119.4px;top:700.5px;width:13px;height:13px;background:#1e88e5;border-radius:2.500px;"></div>
<svg style="left:119.4px;top:700.5px" width="13" height="13" viewBox="0 0 13 13"><path d="M3 6.800l2.400 2.400L10 4" stroke="#fff" stroke-width="1.700" fill="none"/></svg>
<div style="left:134.5px;top:788px;width:2px;height:1.5px;background:#c6c6c6;"></div>
<div style="left:139px;top:788px;width:2px;height:1.5px;background:#c6c6c6;"></div>
<div style="left:143.5px;top:788px;width:2px;height:1.5px;background:#c6c6c6;"></div>
<div style="left:2px;top:794px;width:276px;height:45.5px;background:#fff;border:1px solid #cfcfcf;"></div>
<div style="left:3.5px;top:796px;width:260px;height:29.2px;background:#ffffc2;border:1px solid #ebebbd;"></div>
<div style="left:263.5px;top:825.2px;width:13px;height:12.5px;background:#ececec;"></div>
<span class="t" style="left:6.6px;top:797.10px;font-size:13.2px;line-height:17px;color:#000;letter-spacing:0.002px;">Specifies the placement of the control on its</span>
<span class="t" style="left:6.6px;top:812.10px;font-size:13.2px;line-height:17px;color:#000;letter-spacing:-0.112px;">Parent control.</span>
<div style="left:267px;top:798.5px;width:6px;height:24px;background:#a9a9a9;border-radius:3px;"></div>
<div style="left:6px;top:829px;width:243px;height:5.5px;background:#b4b4b4;border-radius:3px;"></div>
<span class="t" style="left:1.4px;top:843.00px;font-size:13.6px;line-height:18px;color:#383838;letter-spacing:-0.140px;">TMemo.Align:TAlign = (alNone, alTop, alBott…</span>
<div style="left:283px;top:116px;width:372px;height:17px;background:#9e9e9e;"><div style="left:1px;top:1px;width:370px;height:15px;background:#f0f0f0;border-style:solid;border-width:3px 3px 2.500px 3px;border-color:#fff #a8a8a8 #a8a8a8 #fff"></div></div>
<span class="t" style="left:659.4px;top:116.60px;font-size:13.6px;line-height:18px;color:#383838;letter-spacing:0.107px;">Редактор исходного кода</span>
<div style="left:824px;top:116px;width:368px;height:17px;background:#9e9e9e;"><div style="left:1px;top:1px;width:366px;height:15px;background:#f0f0f0;border-style:solid;border-width:3px 3px 2.500px 3px;border-color:#fff #a8a8a8 #a8a8a8 #fff"></div></div>
<svg style="left:1194px;top:118.9px" width="12" height="12" viewBox="-6 -6 12 12"><path d="M-3.1 -3.1L3.1 3.1M3.1 -3.1L-3.1 3.1" stroke="#000" stroke-width="2.600"/></svg>
<div style="left:283px;top:134.2px;width:925px;height:1px;background:#b5cdcb;"></div>
<div style="left:290.8px;top:139px;width:11.2px;height:8px;background:#fff;border:1.500px solid #c9a227;"></div>
<div style="left:293.7px;top:141.7px;width:5.5px;height:1.5px;background:#2f6fe0;"></div>
<div style="left:327.3px;top:141.2px;width:2px;height:2px;background:#e01b24;"></div>
<div style="left:353.7px;top:141.2px;width:2px;height:2px;background:#26a269;"></div>
<div style="left:365px;top:136px;width:1px;height:8px;background:#d0d0d0;"></div>
<div style="left:284px;top:190px;width:924px;height:448.5px;background:#fcfcfc;border:1px solid #d8d8d8;"></div>
<div style="left:286px;top:192px;width:916px;height:434px;background:#ffffff;border:1px solid #dcdcdc;"></div>
<div style="left:1177px;top:192.5px;width:11.5px;height:432.5px;background:#e2e2e2;"></div>
<div style="left:1177px;top:374px;width:11.5px;height:206px;background:#c1c1c1;"></div>
<div style="left:1177px;top:192.5px;width:1px;height:432.5px;background:#8a8a8a;"></div>
<div style="left:1177.8px;top:504px;width:3.4px;height:8px;background:#0a7d0a;"></div>
<div style="left:1189px;top:192.5px;width:13px;height:432.5px;background:#fbfbfb;border-left:1px solid #e2e2e2;"></div>
<div style="left:1193px;top:375.5px;width:6px;height:203px;background:#b9b9b9;border-radius:3px;"></div>
<div style="left:1210.5px;top:483.5px;width:1.5px;height:1.5px;background:#c2c2c2;"></div>
<div style="left:1210.5px;top:488px;width:1.5px;height:1.5px;background:#c2c2c2;"></div>
<div style="left:1210.5px;top:492.5px;width:1.5px;height:1.5px;background:#c2c2c2;"></div>
<svg style="left:286.1px;top:664.1px" width="12" height="12" viewBox="-6 -6 12 12"><path d="M-3.1 -3.1L3.1 3.1M3.1 -3.1L-3.1 3.1" stroke="#000" stroke-width="2.600"/></svg>
<div style="left:283px;top:678px;width:17px;height:180px;background:#9e9e9e;"><div style="left:1px;top:1px;width:15px;height:178px;background:#f0f0f0;border-style:solid;border-width:3px 3px 2.500px 3px;border-color:#fff #a8a8a8 #a8a8a8 #fff"></div></div>
<div style="left:301.5px;top:663px;width:90px;height:28px;background:#fff;border:1px solid #dadada;border-bottom:none;border-radius:3px 3px 0 0;"></div>
<span class="t" style="left:310px;top:668.80px;font-size:13.6px;line-height:18px;color:#383838;letter-spacing:0.002px;">Сообщения</span>
<span class="t" style="left:398.8px;top:669.00px;font-size:13.6px;line-height:18px;color:#383838;letter-spacing:0.140px;">Наблюдения</span>
<span class="t" style="left:496.3px;top:669.00px;font-size:13.6px;line-height:18px;color:#383838;letter-spacing:-0.070px;">Ассемблер</span>
<span class="t" style="left:580.8px;top:669.00px;font-size:13.6px;line-height:18px;color:#383838;letter-spacing:0.070px;">Точки останова</span>
<div style="left:301.5px;top:689.5px;width:906px;height:169.5px;background:#fff;border:1px solid #d8d8d8;"></div>
<div style="left:305px;top:691px;width:885.5px;height:166px;background:#fff;"></div>
<div style="left:306px;top:691px;width:884px;height:18.5px;background:#62fc62;"></div>
<div style="left:306px;top:691px;width:884px;height:1px;background:repeating-linear-gradient(90deg,#050505 0 4px,transparent 4px 6px);"></div>
<div style="left:306px;top:709px;width:884px;height:18px;background:#62fc62;"></div>
<div style="left:306px;top:709px;width:884px;height:1px;background:repeating-linear-gradient(90deg,#050505 0 4px,transparent 4px 6px);"></div>
<span class="t" style="left:307.7px;top:692.10px;font-size:13.3px;line-height:17px;color:#2b2b2b;letter-spacing:0.077px;">Компиляция пакета ray4laz 5.6.2: Успешно</span>
<span class="t" style="left:307.7px;top:710.00px;font-size:13.3px;line-height:17px;color:#2b2b2b;letter-spacing:0.248px;">Компиляция проекта, цель: /home/vadim/Проекты/testGui/project1: Успешно</span>
<div style="left:1191px;top:691px;width:13px;height:166px;background:#fbfbfb;border-left:1px solid #e4e4e4;"></div>
<div style="left:1194.5px;top:694px;width:5px;height:160px;background:#b9b9b9;border-radius:3px;"></div>
<div style="left:1214px;top:118px;width:1px;height:2px;background:#aaa;"></div>
<div style="left:1214px;top:129px;width:1px;height:2px;background:#aaa;"></div>
<span class="t" style="left:1217.5px;top:116.90px;font-size:13.6px;line-height:18px;color:#383838;letter-spacing:-0.091px;">Обозреватель кода, Компоненты</span>
<div style="left:1425.5px;top:117px;width:3.5px;height:15.5px;background:#ececec;border-left:1px solid #fff;border-right:1.500px solid #9f9f9f;border-bottom:2px solid #9f9f9f;"></div>
<svg style="left:1426.3px;top:118.9px" width="12" height="12" viewBox="-6 -6 12 12"><path d="M-3.1 -3.1L3.1 3.1M3.1 -3.1L-3.1 3.1" stroke="#000" stroke-width="2.600"/></svg>
<svg style="left:1216px;top:140px" width="12" height="14" viewBox="0 0 12 14"><path d="M8.500 2L3.500 7l5 5" stroke="#555" stroke-width="1.500" fill="none"/></svg>
<svg style="left:1426px;top:140px" width="12" height="14" viewBox="0 0 12 14"><path d="M3.500 2l5 5-5 5" stroke="#555" stroke-width="1.500" fill="none"/></svg>
<div style="left:1230.5px;top:135.5px;width:193px;height:26px;background:#fff;border-radius:3px 3px 0 0;"></div>
<span class="t" style="left:1266.4px;top:139.50px;font-size:13.6px;line-height:18px;color:#383838;letter-spacing:-0.018px;">Обозреватель кода</span>
<div style="left:1214.2px;top:160.2px;width:226px;height:698.5px;background:#fbfbfb;border:1px solid #dcdcdc;border-bottom:none;"></div>
<div style="left:1219.4px;top:162.5px;width:216.5px;height:26px;background:#efefef;"></div>
<div style="left:1219.4px;top:188px;width:216.5px;height:670px;background:#fdfdfd;border:1px solid #dcdcdc;"></div>
<div style="left:1219.5px;top:162.5px;width:41px;height:26.5px;background:#fff;border:1px solid #dadada;border-bottom:none;border-radius:3px 3px 0 0;"></div>
<span class="t" style="left:1228px;top:167.80px;font-size:13.6px;line-height:18px;color:#383838;letter-spacing:0.787px;">Код</span>
<span class="t" style="left:1268px;top:168.10px;font-size:13.6px;line-height:18px;color:#383838;letter-spacing:0.182px;">Директивы</span>
<div style="left:1224.5px;top:190.5px;width:109px;height:27px;background:#fff;border:1px solid #cdcdcd;border-radius:4px;"></div>
<span class="t" style="left:1231.9px;top:195.50px;font-size:13.6px;line-height:18px;color:#b4b4b4;letter-spacing:-0.140px;">(фильтр)</span>
<div style="left:1337px;top:190.5px;width:21px;height:27px;background:#f4f4f4;border:1px solid #d3d3d3;border-radius:3px;"></div>
<svg style="left:1338px;top:194px" width="92" height="20" viewBox="0 0 92 20">
<path d="M3 4h10l-4 5v6l-2-1.500v-4.500z" fill="#f0f0f0" stroke="#8e8e8e" stroke-width="1"/><path d="M11.500 12l4 4m0-4l-4 4" stroke="#555" stroke-width="1.300"/>
<g fill="none" stroke-width="2"><path d="M28.500 8a6 6 0 0 1 10.500-2.500" stroke="#e5352b"/><path d="M40.500 11a6 6 0 0 1-10.500 3" stroke="#2f6fe0"/></g><path d="M41 2.500v4.500h-4.500z" fill="#e5352b"/><path d="M28.500 17v-4.500h4.500z" fill="#2f6fe0"/>
<path d="M51.500 3.500h8l3 3v10h-11z" fill="#f4f8ff" stroke="#5a8fe6" stroke-width="1"/><path d="M54 8h1.500M54 11h1.500M54 14h1.500" stroke="#e5352b" stroke-width="1.200"/><path d="M57 8h3M57 11h3M57 14h3" stroke="#9ab" stroke-width="1"/>
<path d="M79 10l7 6.500" stroke="#a8a8a8" stroke-width="2" stroke-linecap="round"/><path d="M73.500 4.500l6 5.500" stroke="#c8161d" stroke-width="3" stroke-linecap="round"/><path d="M80 10l5-4.500" stroke="#b0b0b0" stroke-width="2.200" stroke-linecap="round"/><path d="M74.500 16l6-6" stroke="#2f6fe0" stroke-width="2.800" stroke-linecap="round"/><circle cx="86.500" cy="5" r="2.500" fill="none" stroke="#b4b4b4" stroke-width="1.500"/>
</svg>
<div style="left:1224.5px;top:219.5px;width:206px;height:622.5px;background:#fff;border:1px solid #d8d8d8;"></div>
<div style="left:1416.5px;top:220.5px;width:1px;height:620.5px;background:#e4e4e4;"></div>
<div style="left:1420.3px;top:222px;width:5.5px;height:615px;background:#b6b6b6;border-radius:3px;"></div>
<div style="left:1224.5px;top:841.5px;width:206px;height:15.5px;background:#fff;border:1px solid #d8d8d8;border-top:none;"></div>
<div style="left:1227.2px;top:846.2px;width:186.6px;height:5.8px;background:#b6b6b6;border-radius:3px;"></div>
<svg style="left:1226px;top:220px" width="14" height="72" viewBox="0 0 14 72"><g stroke="#3c8fd0" stroke-width="1" stroke-dasharray="1 1.500" fill="none"><path d="M6.500 15v8M6.500 33v8M6.500 51v8"/><path d="M11 9.500h3M11 27.500h3M11 45.500h3M11 63.500h3"/></g></svg>
<div style="left:1227px;top:224.5px;width:10px;height:10px;background:#fff;border:1px solid #c4c4c4;border-radius:2px;"></div>
<div style="left:1229.5px;top:229.0px;width:5px;height:1px;background:#555;"></div>
<div style="left:1231.5px;top:227.0px;width:1px;height:5px;background:#555;"></div>
<svg style="left:1241px;top:222.5px" width="17" height="14" viewBox="0 0 17 14"><path d="M1 12.500v-10.500h5l1.500 2h8v8.500z" fill="#efc466" stroke="#d6a648" stroke-width="1"/><path d="M1 12.500l1.500-6.500h13.500l-1.500 6.500z" fill="#fbdf9a" stroke="#d6a648" stroke-width="1" stroke-linejoin="round"/></svg>
<span class="t" style="left:1260.2px;top:220.60px;font-size:13.6px;line-height:18px;color:#383838;letter-spacing:-0.015px;">Константы</span>
<div style="left:1227px;top:242.5px;width:10px;height:10px;background:#fff;border:1px solid #c4c4c4;border-radius:2px;"></div>
<div style="left:1229.5px;top:247.0px;width:5px;height:1px;background:#555;"></div>
<div style="left:1231.5px;top:245.0px;width:1px;height:5px;background:#555;"></div>
<svg style="left:1241px;top:240.5px" width="17" height="14" viewBox="0 0 17 14"><path d="M1 12.500v-10.500h5l1.500 2h8v8.500z" fill="#efc466" stroke="#d6a648" stroke-width="1"/><path d="M1 12.500l1.500-6.500h13.500l-1.500 6.500z" fill="#fbdf9a" stroke="#d6a648" stroke-width="1" stroke-linejoin="round"/></svg>
<span class="t" style="left:1260.2px;top:238.60px;font-size:13.6px;line-height:18px;color:#383838;letter-spacing:0.188px;">Типы</span>
<div style="left:1227px;top:260.5px;width:10px;height:10px;background:#fff;border:1px solid #c4c4c4;border-radius:2px;"></div>
<div style="left:1229.5px;top:265.0px;width:5px;height:1px;background:#555;"></div>
<div style="left:1231.5px;top:263.0px;width:1px;height:5px;background:#555;"></div>
<svg style="left:1241px;top:258.5px" width="17" height="14" viewBox="0 0 17 14"><path d="M1 2.500c2.500-1.300 5-1.300 7.500 0c2.500-1.300 5-1.300 7.500 0v9c-2.500-1.300-5-1.300-7.500 0c-2.500-1.300-5-1.300-7.500 0z" fill="#eef3fb" stroke="#3d6fb5" stroke-width="1.200"/><path d="M8.500 2.500v9" stroke="#3d6fb5" stroke-width="1"/><path d="M3 5h4M3 7h4M3 9h4M10 5h4M10 7h4M10 9h4" stroke="#8aa" stroke-width=".8"/></svg>
<span class="t" style="left:1260.2px;top:256.60px;font-size:13.6px;line-height:18px;color:#383838;letter-spacing:-0.013px;">Процедуры</span>
<div style="left:1227px;top:278.5px;width:10px;height:10px;background:#fff;border:1px solid #c4c4c4;border-radius:2px;"></div>
<div style="left:1229.5px;top:283.0px;width:5px;height:1px;background:#555;"></div>
<div style="left:1231.5px;top:281.0px;width:1px;height:5px;background:#555;"></div>
<svg style="left:1241px;top:276.5px" width="17" height="14" viewBox="0 0 17 14"><path d="M1 12.500v-10.500h5l1.500 2h8v8.500z" fill="#efc466" stroke="#d6a648" stroke-width="1"/><path d="M1 12.500l1.500-6.500h13.500l-1.500 6.500z" fill="#fbdf9a" stroke="#d6a648" stroke-width="1" stroke-linejoin="round"/></svg>
<span class="t" style="left:1260.2px;top:274.60px;font-size:13.6px;line-height:18px;color:#383838;letter-spacing:0.016px;">Используемые модули</span>
<div style="left:0px;top:859px;width:1440px;height:41px;background:#1c1c22;"></div>
<div style="left:1430px;top:859px;width:10px;height:41px;background:#2b2b33;"></div>
<div style="left:52px;top:864px;width:1px;height:31px;background:#35353d;"></div>
<div style="left:325px;top:859px;width:38px;height:41px;background:#30303a;"></div>
<div style="left:61px;top:898px;width:38px;height:2px;background:#1f9ede;"></div>
<div style="left:193px;top:898px;width:38px;height:2px;background:#1f9ede;"></div>
<div style="left:237px;top:898px;width:38px;height:2px;background:#1f9ede;"></div>
<div style="left:281px;top:898px;width:38px;height:2px;background:#1f9ede;"></div>
<div style="left:325px;top:898px;width:38px;height:2px;background:#1f9ede;"></div>
<svg style="left:0;top:859px" width="380" height="41" viewBox="0 0 380 41"><defs><linearGradient id="gff" x1="0" y1="0" x2="0" y2="1"><stop offset="0" stop-color="#ff7a35"/><stop offset="1" stop-color="#f43f5e"/></linearGradient><linearGradient id="gte" x1="0" y1="0" x2="0" y2="1"><stop offset="0" stop-color="#b0a8e0"/><stop offset="1" stop-color="#8a80cc"/></linearGradient><linearGradient id="glz" x1="0" y1="0" x2="0" y2="1"><stop offset="0" stop-color="#3b6198"/><stop offset="1" stop-color="#12346a"/></linearGradient><linearGradient id="ggh" x1="0" y1="0" x2="0" y2="1"><stop offset="0" stop-color="#9330b6"/><stop offset="1" stop-color="#6a2896"/></linearGradient><linearGradient id="gpw" x1="0" y1="0" x2="0" y2="1"><stop offset="0" stop-color="#f2f4f8"/><stop offset=".55" stop-color="#a9d4f0"/><stop offset="1" stop-color="#35b2ea"/></linearGradient><linearGradient id="gtm" x1="0" y1="0" x2="0" y2="1"><stop offset="0" stop-color="#2c2c2e"/><stop offset="1" stop-color="#141416"/></linearGradient></defs><circle cx="22" cy="21.100" r="15.300" fill="none" stroke="#f2f2f2" stroke-width="1.900"/><path d="M15 13.500v8.700a4.300 4.300 0 0 0 4.300 4.300h6.700a4.300 4.300 0 0 0 4.300-4.300v-4.200a2.700 2.700 0 0 0-5.400 0v4.500M24.900 18a2.700 2.700 0 0 0-5.400 0v4.500" fill="none" stroke="#f2f2f2" stroke-width="2.100" stroke-linecap="round" stroke-linejoin="round"/><rect x="66" y="5.600" width="28.400" height="28.600" rx="6" fill="url(#gff)"/><circle cx="80.300" cy="21" r="9.300" fill="#fff"/><circle cx="80.800" cy="21.800" r="4.600" fill="#f6504f"/><path d="M71.500 15.500c.5-2.500 1.800-4 3.300-4.800c.2 1.400 1 2.300 2.200 2.700l-3 3.600zM82 9.200c2.800.7 5.200 3 6.300 5.800c-.8-.6-1.800-.9-2.700-.8c-.5-2-1.800-3.700-3.600-5z" fill="#fff"/><path d="M76.500 15.800c1.500-.8 3.500-.5 5.500.5l-2.500 1.500c-1.200-.2-2 .2-3 1z" fill="#f6504f"/><path d="M109.700 9.500a2.500 2.500 0 0 1 2.500-2.500h6.800l3.200 3h13.500a2.500 2.500 0 0 1 2.500 2.500v20.400h-28.500z" fill="#1b80c5"/><rect x="112" y="11.800" width="24.500" height="4" rx="1" fill="#f3ead6"/><rect x="109.700" y="14" width="28.500" height="21.400" rx="2.200" fill="#55b3ea"/><rect x="153.900" y="5.600" width="28.200" height="28.600" rx="6" fill="url(#gtm)" stroke="#38383e" stroke-width=".8"/><rect x="197.800" y="5.600" width="28.600" height="28.600" rx="6" fill="url(#gte)"/><rect x="204" y="9.800" width="16" height="20.200" rx="1.300" fill="#fbfaff"/><path d="M205.800 14.500h12.300M205.800 16.600h12.300M205.800 18.700h12.300M205.800 20.600h8.700" stroke="#7d70c4" stroke-width="1"/><rect x="242" y="6" width="28" height="28.200" rx="6" fill="url(#glz)"/><g transform="rotate(14 256 21)" fill="#fafcff"><ellipse cx="256.300" cy="26.300" rx="6" ry="4.200"/><ellipse cx="248.600" cy="20" rx="2" ry="3.100" transform="rotate(-28 248.600 20)"/><ellipse cx="253" cy="15" rx="2" ry="3.300" transform="rotate(-8 253 15)"/><ellipse cx="258.800" cy="14.600" rx="2" ry="3.300" transform="rotate(8 258.800 14.600)"/><ellipse cx="263.800" cy="18.800" rx="2" ry="3.100" transform="rotate(28 263.800 18.800)"/></g><circle cx="245.800" cy="8.500" r="7.900" fill="#1f9ede"/><rect x="287" y="7" width="25.800" height="25.800" rx="5.500" fill="url(#ggh)"/><circle cx="299.900" cy="19.900" r="10.800" fill="#f4eefa"/><path d="M299.900 13.200c-1.200 0-2.300.2-3.200.7l-2.500-1.200v3.100c-.9 1-1.400 2.200-1.400 3.700c0 3.100 2.300 5 4.700 5.400l-.3 1.200c-1.400.6-2.600.2-3.500-1.400c-.4-.6-1-.8-1.400-.6c1.200.5 1.300 2.500 3 3c.7.200 1.500.1 2.100-.1v3.500h5v-5.500c2.500-.4 4.700-2.300 4.700-5.400c0-1.500-.5-2.700-1.400-3.700v-3.100l-2.500 1.200c-.9-.5-2-.7-3.300-.7z" fill="#7a2ba6"/><circle cx="343.750" cy="19.900" r="13.600" fill="#2a5fa8"/><circle cx="343.750" cy="19.900" r="12.500" fill="url(#gpw)"/><g transform="rotate(10 343.750 20)" fill="#060608"><ellipse cx="344" cy="25.200" rx="6.200" ry="4.400"/><ellipse cx="335.600" cy="19.300" rx="2.100" ry="3.200" transform="rotate(-28 335.600 19.300)"/><ellipse cx="340.300" cy="13.800" rx="2.200" ry="3.500" transform="rotate(-8 340.300 13.800)"/><ellipse cx="346.800" cy="13.500" rx="2.200" ry="3.500" transform="rotate(8 346.800 13.500)"/><ellipse cx="352" cy="18.200" rx="2.100" ry="3.200" transform="rotate(28 352 18.200)"/></g></svg>
<span class="t" style="left:157px;top:865.30px;font-size:9px;line-height:12px;color:#f2f2f2;font-weight:bold;">$</span>
<div style="left:163.2px;top:875.2px;width:6px;height:1.4px;background:#f2f2f2;"></div>
<span class="t" style="left:242.8px;top:860.40px;font-size:11px;line-height:14px;color:#fff;font-weight:bold;">2</span>
<svg style="left:1230px;top:859px" width="160" height="41" viewBox="0 0 160 41"><rect x="10.800" y="13.500" width="11.200" height="15.400" rx="5.600" fill="#ededed"/><path d="M13.700 18.200l5.400 5.600-2.700 2.500v-10.400l2.700 2.500-5.400 5.400" fill="none" stroke="#25252b" stroke-width="1.100" stroke-linejoin="round"/><g transform="translate(42 21.200) scale(.9) translate(-42 -21.200)"><path d="M42 13.200c2.500 1.500 5 2.200 7.800 2.300c0 6-1.800 10.500-7.800 13.800c-6-3.300-7.800-7.800-7.800-13.800c2.800-.1 5.300-.8 7.800-2.300z" fill="none" stroke="#ededed" stroke-width="1.700" stroke-linejoin="round"/><path d="M42 16.200c-1.600.9-3.300 1.400-5 1.600c.2 4 1.600 6.700 5 8.800z" fill="#ededed"/><path d="M42 16.200c1.600.9 3.300 1.400 5 1.600c-.2 4-1.600 6.700-5 8.800z" fill="#8d8d92"/></g><circle cx="47" cy="26" r="3" fill="#f37329"/><rect x="64.700" y="11.500" width="26.500" height="18.700" rx="1.200" fill="#f4f4f4"/><rect x="64.700" y="11.50" width="26.500" height="1.440" fill="#c9404f"/><rect x="64.700" y="14.38" width="26.500" height="1.440" fill="#c9404f"/><rect x="64.700" y="17.26" width="26.500" height="1.440" fill="#c9404f"/><rect x="64.700" y="20.14" width="26.500" height="1.440" fill="#c9404f"/><rect x="64.700" y="23.02" width="26.500" height="1.440" fill="#c9404f"/><rect x="64.700" y="25.90" width="26.500" height="1.440" fill="#c9404f"/><rect x="64.700" y="28.78" width="26.500" height="1.440" fill="#c9404f"/><rect x="64.700" y="11.500" width="15.300" height="10.100" fill="#4b5b9b"/><path d="M66 13.300h13M66.800 15.300h12M66 17.300h13M66.800 19.300h12" stroke="#c9cfe6" stroke-width=".7" stroke-dasharray=".8 1.200"/><g fill="none" stroke="#ededed" stroke-width="1.900" stroke-linecap="round"><path d="M105.800 18.500a10.200 10.200 0 0 1 14.400 0"/><path d="M108.300 21.300a6.700 6.700 0 0 1 9.400 0"/><path d="M110.700 24a3.300 3.300 0 0 1 4.600 0"/></g><circle cx="113" cy="26.600" r="1.300" fill="#ededed"/><path d="M133 18h3.200l4.800-4.200v14.400l-4.800-4.200h-3.200z" fill="#d4d4d4"/><path d="M143.600 18.800l4.400 4.400m0-4.400l-4.400 4.400" stroke="#ededed" stroke-width="1.900" stroke-linecap="round"/></svg>
<span class="t" style="left:1391.3px;top:871.80px;font-size:12.8px;line-height:17px;color:#f4f4f4;font-weight:bold;letter-spacing:0.016px;">16:37</span>
<div style="left:262px;top:143px;width:744px;height:518px;background:#f5f5f5;border-radius:9px 9px 0 0;box-shadow:0 2px 15px 2px rgba(0,0,0,.42),0 0 0 1px rgba(0,0,0,.36);overflow:hidden;"><div style="left:0;top:0;width:744px;height:32px;background:#ebebec;border-top:1px solid #f7f7f7"></div><div style="left:594px;top:32px;width:150px;height:487px;background:#fff;border-left:1px solid #e2e2e2"></div></div>
<span class="t" style="left:613.6px;top:150.60px;font-size:13.6px;line-height:18px;color:#2a2a2a;letter-spacing:0.130px;-webkit-text-stroke:.45px #2a2a2a;">Form1</span>
<svg style="left:922px;top:148px" width="80" height="24" viewBox="0 0 80 24">
<path d="M7 13.400h8" stroke="#1f1f1f" stroke-width="1.200"/>
<rect x="35.400" y="7.300" width="7.300" height="7.300" fill="none" stroke="#1f1f1f" stroke-width="1.100"/>
<circle cx="66.800" cy="11" r="9.200" fill="#1f9ede"/>
<path d="M63 7.200l7.600 7.600M70.600 7.200l-7.600 7.600" stroke="#fff" stroke-width="1.400" stroke-linecap="round"/>
</svg>
<span class="t" style="left:271.5px;top:181.00px;font-size:20.3px;line-height:26px;color:#009e2f;font-family:'DejaVu Sans','Liberation Sans',sans-serif;transform:scaleX(0.9065);transform-origin:0 50%;-webkit-text-stroke:.35px currentColor;">60</span>
<span class="t" style="left:303.4px;top:181.00px;font-size:20.3px;line-height:26px;color:#009e2f;font-family:'DejaVu Sans Mono','Liberation Mono',monospace;transform:scaleX(1.1572);transform-origin:0 50%;-webkit-text-stroke:.35px currentColor;">FPS</span>
<span class="t" style="left:301.5px;top:210.60px;font-size:20.3px;line-height:26px;color:#be2137;font-family:'DejaVu Sans Mono','Liberation Mono',monospace;transform:scaleX(1.0360);transform-origin:0 50%;-webkit-text-stroke:.35px currentColor;">WOW!</span>
<span class="t" style="left:359.8px;top:210.60px;font-size:20.3px;line-height:26px;color:#be2137;font-family:'DejaVu Sans','Liberation Sans',sans-serif;transform:scaleX(1.0066);transform-origin:0 50%;-webkit-text-stroke:.35px currentColor;">raylib</span>
<span class="t" style="left:427px;top:210.60px;font-size:20.3px;line-height:26px;color:#be2137;font-family:'DejaVu Sans Mono','Liberation Mono',monospace;transform:scaleX(0.9172);transform-origin:0 50%;-webkit-text-stroke:.35px currentColor;">on</span>
<span class="t" style="left:457.6px;top:210.60px;font-size:20.3px;line-height:26px;color:#be2137;font-family:'DejaVu Sans','Liberation Sans',sans-serif;transform:scaleX(0.9756);transform-origin:0 50%;-webkit-text-stroke:.35px currentColor;">MEMORY</span>
<span class="t" style="left:553.7px;top:210.60px;font-size:20.3px;line-height:26px;color:#be2137;font-family:'DejaVu Sans','Liberation Sans',sans-serif;transform:scaleX(0.9305);transform-origin:0 50%;-webkit-text-stroke:.35px currentColor;">BUFFER!!!</span>
<div style="left:327px;top:319px;width:73px;height:25px;background:#fdfdfd;border:1px solid #d0d0d0;border-radius:3px;"></div>
<span class="t" style="left:338px;top:322.60px;font-size:13.6px;line-height:18px;color:#383838;letter-spacing:0.421px;">Button1</span>
<svg style="left:370px;top:315px" width="450" height="280" viewBox="0 0 450 280"><g fill="none" stroke-width="1"><path d="M12.5 43.3L19.7 270.5M12.5 43.3L283.3 10.3M42.1 39.7L67.7 260.9M13.0 57.7L293.6 22.1M71.0 36.2L114.2 251.6M13.5 73.4L304.8 34.8M99.4 32.7L159.1 242.5M14.0 90.4L316.8 48.6M127.2 29.3L202.6 233.8M14.6 109.0L329.7 63.4M181.3 22.7L285.7 217.1M15.9 151.9L359.2 97.1M207.5 19.5L325.4 209.2M16.7 176.8L376.0 116.4M233.3 16.4L363.9 201.5M17.6 204.5L394.5 137.5M258.5 13.3L401.2 194.0M18.6 235.5L414.9 160.8M283.3 10.3L437.5 186.7M19.7 270.5L437.5 186.7" stroke="#b9b9b9" stroke-width="1"/><path d="M154.5 26.0L244.8 225.3M15.2 129.4L343.8 79.6" stroke="#5a5a5a"/></g><polygon points="147.5,61.7 212.5,52.5 233.3,89.2 230.8,142.5 164.2,155.8 149.3,116.7" fill="#e62937"/><path d="M149.29999999999995 116.69999999999999L156 128L170 151M165.20000000000005 154L230.79999999999995 141" stroke="#ef8c95" stroke-width="1" fill="none"/><path d="M150 74L163 97L233 87" stroke="#c82231" stroke-width="1" stroke-dasharray="1 3" fill="none"/><path d="M198 123L211 147" stroke="#a05560" stroke-width="1" fill="none"/></svg>
</body></html>
